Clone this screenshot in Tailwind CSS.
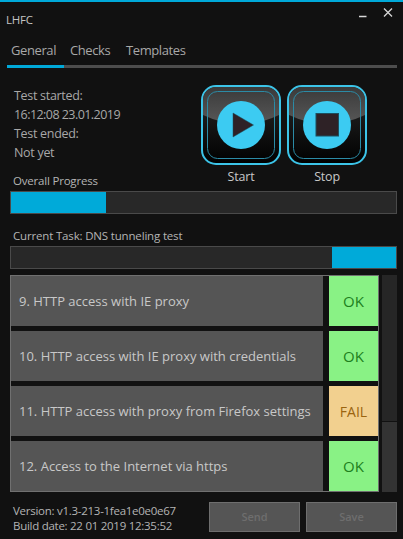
<!DOCTYPE html>
<html lang="en">
<head>
    <meta charset="UTF-8">
    <meta name="viewport" content="width=device-width, initial-scale=1.0">
    <title>LHFC</title>
    <script src="https://cdn.jsdelivr.net/npm/@tailwindcss/browser@4"></script>
</head>
<body class="bg-[#111111]">
    <div class="w-[403px] h-[539px] overflow-hidden flex flex-col bg-[#111111] border-t-2 border-[#00a9d9] font-['Open_Sans',sans-serif] text-[#c4c4c4]">
        <!-- title bar -->
        <div class="h-[26px] pl-[6px] pr-[10px] flex justify-between">
            <span class="mt-[10px] text-[11.5px] leading-[16px] tracking-[-0.2px]">LHFC</span>
            <div class="flex items-start gap-[16px] pt-[5px]">
                <svg width="8" height="12" viewBox="0 0 8 12"><path d="M0 9.5H7.5" stroke="#d8d8d8" stroke-width="1.5"/></svg>
                <svg width="10" height="11" viewBox="0 0 10 11"><path d="M1 1.5L9 9.5M9 1.5L1 9.5" stroke="#d8d8d8" stroke-width="1.3"/></svg>
            </div>
        </div>

        <!-- tabs -->
        <div class="ml-[7px] mr-[6px] border-b-[3px] border-[#4d4d4d] h-[40px] relative">
            <div class="flex pl-[4px] pt-[12px] text-[13px] leading-[20px] text-[#a8a8a8] tracking-[-0.4px]">
                <span class="w-[59px]">General</span>
                <span class="w-[56px]">Checks</span>
                <span>Templates</span>
            </div>
            <div class="absolute left-0 -bottom-[3px] w-[57px] h-[3px] bg-[#00a9d9]"></div>
        </div>

        <!-- test info + buttons -->
        <div class="flex h-[105px]">
            <div class="pl-[14px] pt-[18px] w-[201px] text-[12.5px] leading-[19px] text-[#a8a8a8] tracking-[-0.3px]">
                <div>Test started:</div>
                <div class="tracking-[-0.55px]">16:12:08 23.01.2019</div>
                <div>Test ended:</div>
                <div>Not yet</div>
            </div>
            <div class="flex items-start gap-[6px] pt-[17px]">
                <div class="w-[80px] flex flex-col items-center">
                    <svg class="shrink-0" width="80" height="80" viewBox="0 0 80 80">
                        <defs>
                            <linearGradient id="glossA" x1="0" y1="0" x2="0" y2="1"><stop offset="0" stop-color="#3a3a3a"/><stop offset="1" stop-color="#585858"/></linearGradient>
                            <linearGradient id="darkA" x1="0" y1="0" x2="0" y2="1"><stop offset="0" stop-color="#2a2a2a"/><stop offset="1" stop-color="#000000"/></linearGradient>
                        </defs>
                        <rect x="1" y="1" width="78" height="78" rx="14" fill="url(#darkA)" stroke="#3cc4e8" stroke-width="2"/>
                        <path d="M2 30V15A13 13 0 0 1 15 2H65A13 13 0 0 1 78 15V30Q40 48 2 30Z" fill="url(#glossA)"/>
                        <rect x="6.5" y="6.5" width="67" height="67" rx="10" fill="none" stroke="#2b8ba6"/>
                        <circle cx="40" cy="40" r="24" fill="#3ccbf2"/>
                        <path d="M32 28L52.5 40L32 52Z" fill="#2e2226" stroke="#1c4f5e" stroke-width="0.5"/>
                    </svg>
                    <span class="mt-[2px] text-[12.5px] leading-[20px] text-[#c8c8c8] tracking-[-0.2px]">Start</span>
                </div>
                <div class="w-[80px] flex flex-col items-center">
                    <svg class="shrink-0" width="80" height="80" viewBox="0 0 80 80">
                        <defs>
                            <linearGradient id="glossB" x1="0" y1="0" x2="0" y2="1"><stop offset="0" stop-color="#3a3a3a"/><stop offset="1" stop-color="#585858"/></linearGradient>
                            <linearGradient id="darkB" x1="0" y1="0" x2="0" y2="1"><stop offset="0" stop-color="#2a2a2a"/><stop offset="1" stop-color="#000000"/></linearGradient>
                        </defs>
                        <rect x="1" y="1" width="78" height="78" rx="14" fill="url(#darkB)" stroke="#3cc4e8" stroke-width="2"/>
                        <path d="M2 30V15A13 13 0 0 1 15 2H65A13 13 0 0 1 78 15V30Q40 48 2 30Z" fill="url(#glossB)"/>
                        <rect x="6.5" y="6.5" width="67" height="67" rx="10" fill="none" stroke="#2b8ba6"/>
                        <circle cx="40" cy="40" r="24" fill="#3ccbf2"/>
                        <rect x="29" y="28.5" width="22.5" height="22.5" fill="#2e2226" stroke="#1c4f5e"/>
                    </svg>
                    <span class="mt-[2px] text-[12.5px] leading-[20px] text-[#c8c8c8] tracking-[-0.2px]">Stop</span>
                </div>
            </div>
        </div>

        <!-- overall progress -->
        <div class="px-[10px] w-[403px]">
            <div class="pl-[3px] text-[11.5px] leading-[16px] text-[#b4b4b4] tracking-[-0.2px]">Overall Progress</div>
            <div class="w-[387px] mt-[2px] h-[23px] bg-[#282828] border border-[#4a4a4a]">
                <div class="w-[95px] h-full bg-[#00aad9]"></div>
            </div>
            <div class="pl-[3px] mt-[14px] text-[11.5px] leading-[16px] text-[#b4b4b4] tracking-[-0.17px]">Current Task: DNS tunneling test</div>
            <div class="w-[387px] mt-[2px] h-[23px] bg-[#282828] border border-[#4a4a4a] flex justify-end">
                <div class="w-[64px] h-full bg-[#00aad9]"></div>
            </div>
        </div>

        <!-- checks list -->
        <div class="flex pl-[10px] mt-[6px] gap-[3px]">
            <div class="w-[369px] h-[217px] border border-[#707070] bg-[#111111] flex flex-col gap-[5px] text-[13px] text-[#c8c8c8]">
                <div class="flex h-[50px]">
                    <div class="w-[312px] bg-[#555555] pl-[8px] pt-[2px] flex items-center">9. HTTP access with IE proxy</div>
                    <div class="ml-[6px] w-[49px] bg-[#89f285] text-[#1d801d] text-[15px] flex items-center justify-center">OK</div>
                </div>
                <div class="flex h-[50px]">
                    <div class="w-[312px] bg-[#555555] pl-[8px] pt-[2px] flex items-center">10. HTTP access with IE proxy with credentials</div>
                    <div class="ml-[6px] w-[49px] bg-[#89f285] text-[#1d801d] text-[15px] flex items-center justify-center">OK</div>
                </div>
                <div class="flex h-[50px]">
                    <div class="w-[312px] bg-[#555555] pl-[8px] pt-[2px] flex items-center">11. HTTP access with proxy from Firefox settings</div>
                    <div class="ml-[6px] w-[49px] bg-[#f2d08f] text-[#9b6410] text-[14px] flex items-center justify-center">FAIL</div>
                </div>
                <div class="flex h-[50px]">
                    <div class="w-[312px] bg-[#555555] pl-[8px] pt-[2px] flex items-center">12. Access to the Internet via https</div>
                    <div class="ml-[6px] w-[49px] bg-[#89f285] text-[#1d801d] text-[15px] flex items-center justify-center">OK</div>
                </div>
            </div>
            <div class="w-[15px] h-[217px] bg-[#262626] flex flex-col justify-end">
                <div class="h-[71px] bg-[#333333] border-t border-[#111111]"></div>
            </div>
        </div>

        <!-- footer -->
        <div class="flex pl-[13px] pt-[10px]">
            <div class="w-[196px] text-[11.5px] leading-[15px] text-[#b4b4b4] tracking-[-0.27px] pt-[1px]">
                <div>Version: v1.3-213-1fea1e0e0e67</div>
                <div>Build date: 22 01 2019 12:35:52</div>
            </div>
            <div class="flex gap-[6px]">
                <button class="w-[91px] h-[30px] bg-[#555555] border border-[#6e6e6e] text-[#6e6e6e] text-[11px] font-semibold">Send</button>
                <button class="w-[91px] h-[30px] bg-[#555555] border border-[#6e6e6e] text-[#6e6e6e] text-[11px] font-semibold">Save</button>
            </div>
        </div>
    </div>
</body>
</html>
